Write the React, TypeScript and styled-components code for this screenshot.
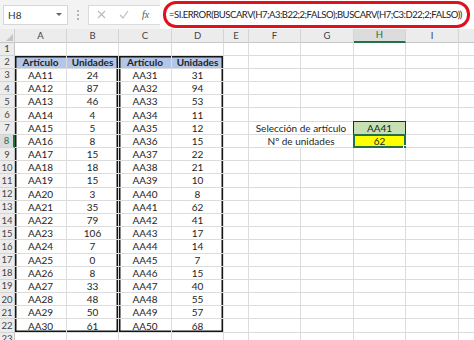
import React from 'react';
import styled, { createGlobalStyle, css } from 'styled-components';

const GlobalStyle = createGlobalStyle`
  * {
    margin: 0;
    padding: 0;
    box-sizing: border-box;
  }
  body {
    background: #fff;
    font-family: Lato, "Liberation Sans", sans-serif;
    overflow: hidden;
  }
`;

const COLS = ['A', 'B', 'C', 'D', 'E', 'F', 'G', 'H', 'I', 'J'];

const left = [24, 87, 46, 4, 5, 8, 15, 18, 15, 3, 35, 79, 106, 7, 0, 8, 33, 48, 50, 61];
const right = [31, 94, 53, 11, 12, 15, 22, 21, 10, 8, 62, 41, 17, 14, 7, 15, 40, 55, 57, 68];

const Frame = styled.div`
  width: 474px;
  height: 340px;
  overflow: hidden;
`;

const Toolbar = styled.div`
  height: 29px;
  display: flex;
  align-items: center;
  background: #f3f3f3;
  padding-left: 3px;
`;

const NameBox = styled.div`
  flex-shrink: 0;
  width: 65px;
  height: 20px;
  background: #fff;
  border: 1px solid #d6d6d6;
  display: flex;
  align-items: center;
  justify-content: space-between;
  padding: 0 5px 0 4px;
  font-size: 10px;
  color: #333;
`;

const Caret = styled.span`
  width: 0;
  height: 0;
  border-left: 3px solid transparent;
  border-right: 3px solid transparent;
  border-top: 3px solid #666;
`;

const Dots = styled.div`
  flex-shrink: 0;
  width: 2px;
  height: 10px;
  margin: 0 9px 0 9px;
  border-left: 2px dotted #b5b5b5;
`;

const FxBox = styled.div`
  flex-shrink: 0;
  width: 72px;
  height: 20px;
  background: #fff;
  border: 1px solid #dadada;
  border-right: none;
  display: flex;
  align-items: center;
  padding-left: 8px;
  gap: 13px;
`;

const Fx = styled.span`
  font-family: "Liberation Serif", serif;
  font-style: italic;
  font-size: 10px;
  color: #555;
`;

const FormulaBar = styled.div`
  flex: 1;
  min-width: 0;
  height: 29px;
  background: #fff;
  display: flex;
  align-items: center;
  padding: 0 4px 0 3px;
`;

const Annotation = styled.div`
  flex: 1;
  min-width: 0;
  height: 27px;
  border: 3px solid #e0101e;
  border-radius: 13px;
  display: flex;
  align-items: center;
  padding-left: 3px;
  font-size: 9.5px;
  letter-spacing: -0.48px;
  color: #222;
  white-space: nowrap;
  overflow: hidden;
`;

const Sheet = styled.div`
  display: grid;
  grid-template-columns: 15px 52px 52px 53px 52px 25px 52px 53px 52px 53px 53px;
  grid-template-rows: 13.5px;
  grid-auto-rows: 13.2px;
`;

const Corner = styled.div`
  background: #ececec;
  border-right: 1px solid #cfcfcf;
  border-bottom: 1px solid #c6c6c6;
  display: flex;
  align-items: flex-end;
  justify-content: flex-end;
  padding: 0 1px 1px 0;
`;

const Tri = styled.span`
  width: 0;
  height: 0;
  border-left: 7px solid transparent;
  border-bottom: 7px solid #c4c4c4;
`;

const ColHead = styled.div<{ $on?: boolean }>`
  background: ${(p) => (p.$on ? '#dcdcdc' : '#ececec')};
  border-right: 1px solid #d4d4d4;
  border-bottom: ${(p) => (p.$on ? '2px solid #217346' : '1px solid #c6c6c6')};
  color: ${(p) => (p.$on ? '#217346' : '#444')};
  font-size: 9.5px;
  display: flex;
  align-items: center;
  justify-content: center;
`;

const RowHead = styled.div<{ $on?: boolean }>`
  background: ${(p) => (p.$on ? '#dcdcdc' : '#ececec')};
  border-right: ${(p) => (p.$on ? '2px solid #217346' : '1px solid #c6c6c6')};
  border-bottom: 1px solid #d4d4d4;
  color: ${(p) => (p.$on ? '#217346' : '#444')};
  font-size: 9.5px;
  display: flex;
  align-items: center;
  justify-content: center;
  overflow: hidden;
`;

type Edge = { t?: boolean; b?: boolean; l?: boolean; r?: boolean };

const edgeShadow = (e?: Edge) => {
  if (!e) return 'none';
  const s: string[] = [];
  if (e.l) s.push('inset 1.5px 0 0 #151515');
  if (e.r) s.push('inset -1.5px 0 0 #151515');
  if (e.t) s.push('inset 0 1.5px 0 #151515');
  if (e.b) s.push('inset 0 -1.5px 0 #151515');
  return s.length ? s.join(', ') : 'none';
};

const Cell = styled.div<{ $fill?: string; $bold?: boolean; $edge?: Edge; $span?: number }>`
  position: relative;
  border-right: 1px solid #dcdcdc;
  border-bottom: 1px solid #dcdcdc;
  background: ${(p) => p.$fill || '#fff'};
  font-size: 10px;
  font-weight: ${(p) => (p.$bold ? 700 : 400)};
  color: #1e1e1e;
  display: flex;
  align-items: center;
  justify-content: center;
  white-space: nowrap;
  box-shadow: ${(p) => edgeShadow(p.$edge)};
  ${(p) =>
    p.$span &&
    css`
      grid-column: span ${p.$span};
    `}
`;

const Boxed = styled(Cell)`
  border: 1px solid #2a2a2a;
  margin: -1px 0 0 -1px;
`;

const Active = styled(Cell)`
  border: 2px solid #217346;
  margin: -1px 0 0 -1px;
`;

const Handle = styled.span`
  position: absolute;
  right: -4px;
  bottom: -4px;
  width: 5px;
  height: 5px;
  background: #217346;
  border: 1px solid #fff;
`;

function tableCell(row: number, col: number) {
  // A-B table and C-D table, rows 2..22
  const inLeft = col === 0 || col === 1;
  const inRight = col === 2 || col === 3;
  if (!(inLeft || inRight) || row < 2 || row > 22) return null;
  const first = col === 0 || col === 2;
  const edge: Edge = { t: row === 2, b: row === 22, l: first, r: !first };
  if (row === 2) {
    return (
      <Cell key={col} $fill="#b4c6e7" $bold $edge={edge}>
        {first ? 'Artículo' : 'Unidades'}
      </Cell>
    );
  }
  const i = row - 3;
  const n = inLeft ? 11 + i : 31 + i;
  const v = inLeft ? left[i] : right[i];
  return (
    <Cell key={col} $edge={edge}>
      {first ? `AA${n}` : v}
    </Cell>
  );
}

function renderRow(row: number) {
  const out: React.ReactNode[] = [];
  for (let c = 0; c < COLS.length; c++) {
    const t = tableCell(row, c);
    if (t) {
      out.push(t);
      continue;
    }
    if ((row === 7 || row === 8) && c === 5) {
      out.push(
        <Cell key={c} $span={2}>
          {row === 7 ? 'Selección de artículo' : 'Nº de unidades'}
        </Cell>
      );
      c++;
      continue;
    }
    if (row === 7 && c === 7) {
      out.push(
        <Boxed key={c} $fill="#c6e0b4">
          AA41
        </Boxed>
      );
      continue;
    }
    if (row === 8 && c === 7) {
      out.push(
        <Active key={c} $fill="#ffff00">
          62
          <Handle />
        </Active>
      );
      continue;
    }
    out.push(<Cell key={c} />);
  }
  return out;
}

export default function App() {
  const rows = Array.from({ length: 23 }, (_, i) => i + 1);
  return (
    <Frame>
      <GlobalStyle />
      <Toolbar>
        <NameBox>
          H8
          <Caret />
        </NameBox>
        <Dots />
        <FxBox>
          <svg width="9" height="9" viewBox="0 0 9 9">
            <path d="M1 1 L8 8 M8 1 L1 8" stroke="#b9b9b9" strokeWidth="1.1" />
          </svg>
          <svg width="10" height="9" viewBox="0 0 10 9">
            <path d="M1 5 L4 8 L9 1" stroke="#b9b9b9" strokeWidth="1.1" fill="none" />
          </svg>
          <Fx>fx</Fx>
        </FxBox>
        <FormulaBar>
          <Annotation>=SI.ERROR(BUSCARV(H7;A3:B22;2;FALSO);BUSCARV(H7;C3:D22;2;FALSO))</Annotation>
        </FormulaBar>
      </Toolbar>
      <Sheet>
        <Corner>
          <Tri />
        </Corner>
        {COLS.map((c) => (
          <ColHead key={c} $on={c === 'H'}>
            {c}
          </ColHead>
        ))}
        {rows.map((r) => (
          <React.Fragment key={r}>
            <RowHead $on={r === 8}>{r}</RowHead>
            {renderRow(r)}
          </React.Fragment>
        ))}
      </Sheet>
    </Frame>
  );
}
